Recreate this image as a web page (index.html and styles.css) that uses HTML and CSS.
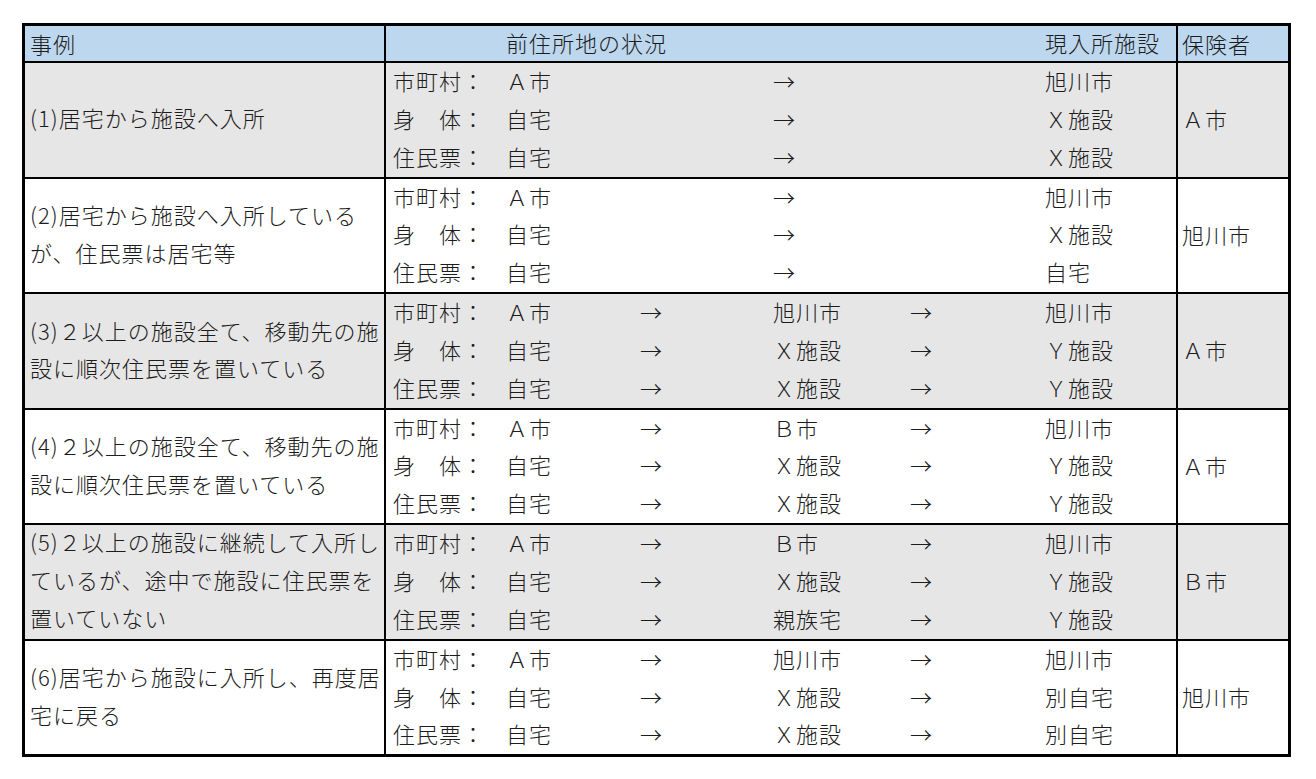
FILE: index.html
```html
<!DOCTYPE html>
<html lang="ja">
<head>
<meta charset="utf-8">
<title>保険者の事例</title>
<link rel="stylesheet" href="styles.css">
</head>
<body>
<div class="sheet">
  <div class="row head">
    <div class="case">事例</div>
    <div class="mid">
      <span></span><span class="wide">前住所地の状況</span><span></span><span></span><span></span><span>現入所施設</span>
    </div>
    <div class="ins">保険者</div>
  </div>

  <div class="row band shade">
    <div class="case">(1)居宅から施設へ入所</div>
    <div class="mid">
      <span>市町村：</span><span>Ａ市</span><span></span><span>→</span><span></span><span>旭川市</span>
      <span>身　体：</span><span>自宅</span><span></span><span>→</span><span></span><span>Ｘ施設</span>
      <span>住民票：</span><span>自宅</span><span></span><span>→</span><span></span><span>Ｘ施設</span>
    </div>
    <div class="ins">Ａ市</div>
  </div>

  <div class="row band">
    <div class="case">(2)居宅から施設へ入所している<br>が、住民票は居宅等</div>
    <div class="mid">
      <span>市町村：</span><span>Ａ市</span><span></span><span>→</span><span></span><span>旭川市</span>
      <span>身　体：</span><span>自宅</span><span></span><span>→</span><span></span><span>Ｘ施設</span>
      <span>住民票：</span><span>自宅</span><span></span><span>→</span><span></span><span>自宅</span>
    </div>
    <div class="ins">旭川市</div>
  </div>

  <div class="row band shade">
    <div class="case">(3)２以上の施設全て、移動先の施<br>設に順次住民票を置いている</div>
    <div class="mid">
      <span>市町村：</span><span>Ａ市</span><span>→</span><span>旭川市</span><span>→</span><span>旭川市</span>
      <span>身　体：</span><span>自宅</span><span>→</span><span>Ｘ施設</span><span>→</span><span>Ｙ施設</span>
      <span>住民票：</span><span>自宅</span><span>→</span><span>Ｘ施設</span><span>→</span><span>Ｙ施設</span>
    </div>
    <div class="ins">Ａ市</div>
  </div>

  <div class="row band">
    <div class="case">(4)２以上の施設全て、移動先の施<br>設に順次住民票を置いている</div>
    <div class="mid">
      <span>市町村：</span><span>Ａ市</span><span>→</span><span>Ｂ市</span><span>→</span><span>旭川市</span>
      <span>身　体：</span><span>自宅</span><span>→</span><span>Ｘ施設</span><span>→</span><span>Ｙ施設</span>
      <span>住民票：</span><span>自宅</span><span>→</span><span>Ｘ施設</span><span>→</span><span>Ｙ施設</span>
    </div>
    <div class="ins">Ａ市</div>
  </div>

  <div class="row band shade">
    <div class="case top">(5)２以上の施設に継続して入所し<br>ているが、途中で施設に住民票を<br>置いていない</div>
    <div class="mid">
      <span>市町村：</span><span>Ａ市</span><span>→</span><span>Ｂ市</span><span>→</span><span>旭川市</span>
      <span>身　体：</span><span>自宅</span><span>→</span><span>Ｘ施設</span><span>→</span><span>Ｙ施設</span>
      <span>住民票：</span><span>自宅</span><span>→</span><span>親族宅</span><span>→</span><span>Ｙ施設</span>
    </div>
    <div class="ins">Ｂ市</div>
  </div>

  <div class="row band">
    <div class="case">(6)居宅から施設に入所し、再度居<br>宅に戻る</div>
    <div class="mid">
      <span>市町村：</span><span>Ａ市</span><span>→</span><span>旭川市</span><span>→</span><span>旭川市</span>
      <span>身　体：</span><span>自宅</span><span>→</span><span>Ｘ施設</span><span>→</span><span>別自宅</span>
      <span>住民票：</span><span>自宅</span><span>→</span><span>Ｘ施設</span><span>→</span><span>別自宅</span>
    </div>
    <div class="ins">旭川市</div>
  </div>
</div>
</body>
</html>
```

FILE: styles.css
```css
* {
  box-sizing: border-box;
}

body {
  margin: 0;
  background: #ffffff;
  color: #1c1c1c;
  font-family: "Noto Sans CJK JP", "Noto Sans", sans-serif;
  font-size: 22px;
  font-weight: 300;
  letter-spacing: 1px;
}

.sheet {
  margin: 23px 0 0 22px;
  width: 1269px;
  border: 3px solid #000;
}

.row {
  display: grid;
  grid-template-columns: 359px 792px 112px;
}

.row + .row {
  border-top: 2px solid #000;
}

.head {
  height: 35px;
  background: #bdd7ee;
}

.band {
  height: 115.55px;
}

.shade {
  background: #e7e6e6;
}

.case {
  display: flex;
  align-items: center;
  padding: 0 0 3px 5px;
  line-height: 37.85px;
  white-space: nowrap;
}

.case.top {
  align-items: flex-start;
  padding-bottom: 0;
  margin-top: -2px;
}

.head .case,
.head .ins {
  line-height: 35px;
  padding-bottom: 2px;
}

.mid {
  display: grid;
  grid-template-columns: 113px 134px 133px 137px 135px 138px;
  grid-auto-rows: 37.85px;
  border-left: 2px solid #000;
}

.head .mid {
  grid-auto-rows: 35px;
}

.mid span {
  padding-left: 7px;
  line-height: 34px;
  white-space: nowrap;
}

.head .mid span {
  line-height: 33px;
}

.mid .wide {
  overflow: visible;
}

.ins {
  display: flex;
  align-items: center;
  padding: 0 0 3px 4px;
  border-left: 2px solid #000;
  white-space: nowrap;
}
```
